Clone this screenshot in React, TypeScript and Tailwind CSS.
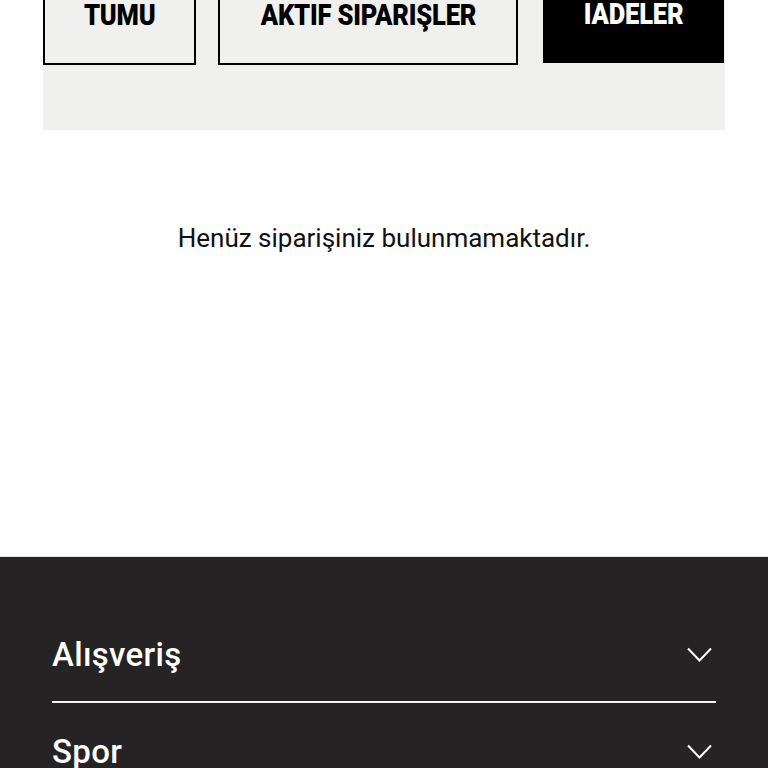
const tabFont = { fontFamily: 'Roboto, "Liberation Sans", sans-serif' };

function Tab({ label, active, width }: { label: string; active?: boolean; width: string }) {
  return (
    <div
      className={
        active
          ? `${width} h-[103px] bg-black text-white flex items-center justify-center`
          : `${width} h-[105px] border-2 border-black text-black flex items-center justify-center`
      }
    >
      <span
        className="pt-[5px] text-[29px] font-black leading-none uppercase whitespace-nowrap scale-x-[0.88] tracking-[-0.2px]"
        style={tabFont}
      >
        {label}
      </span>
    </div>
  );
}

function Chevron() {
  return (
    <svg width="25" height="16" viewBox="0 0 25 16" fill="none" className="mr-[4px]">
      <polyline points="1,1.5 12.5,13.5 24,1.5" stroke="white" strokeWidth="2" />
    </svg>
  );
}

function FooterRow({ label, divider, h }: { label: string; divider?: boolean; h: string }) {
  return (
    <div className={divider ? "border-b-2 border-[#f2f2f2]" : ""}>
      <div className={`flex items-center justify-between ${h}`}>
        <span className="text-[33px] font-medium text-white leading-none tracking-[0.3px]">{label}</span>
        <Chevron />
      </div>
    </div>
  );
}

export default function App() {
  return (
    <div className="w-[768px] h-[768px] overflow-hidden bg-white" style={{ fontFamily: 'Roboto, "Liberation Sans", sans-serif' }}>
      <div className="-mt-[40px]">
        <div className="ml-[43px] w-[682px] h-[170px] bg-[#f0f0ee] flex items-start gap-[22px]">
          <Tab label="Tumu" width="w-[153px]" />
          <Tab label="Aktif Siparişler" width="w-[300px]" />
          <Tab label="Iadeler" active width="w-[181px] ml-[3px]" />
        </div>
        <div className="h-[426px] flex justify-center pt-[95px]">
          <p className="text-[26px] text-[#111] leading-none">Henüz siparişiniz bulunmamaktadır.</p>
        </div>
      </div>
      <footer className="border-t border-[#e6e6e6] bg-[#252324] h-[212px] px-[52px] pt-[51px]">
        <FooterRow label="Alışveriş" divider h="h-[93px]" />
        <FooterRow label="Spor" h="h-[97px]" />
      </footer>
    </div>
  );
}
